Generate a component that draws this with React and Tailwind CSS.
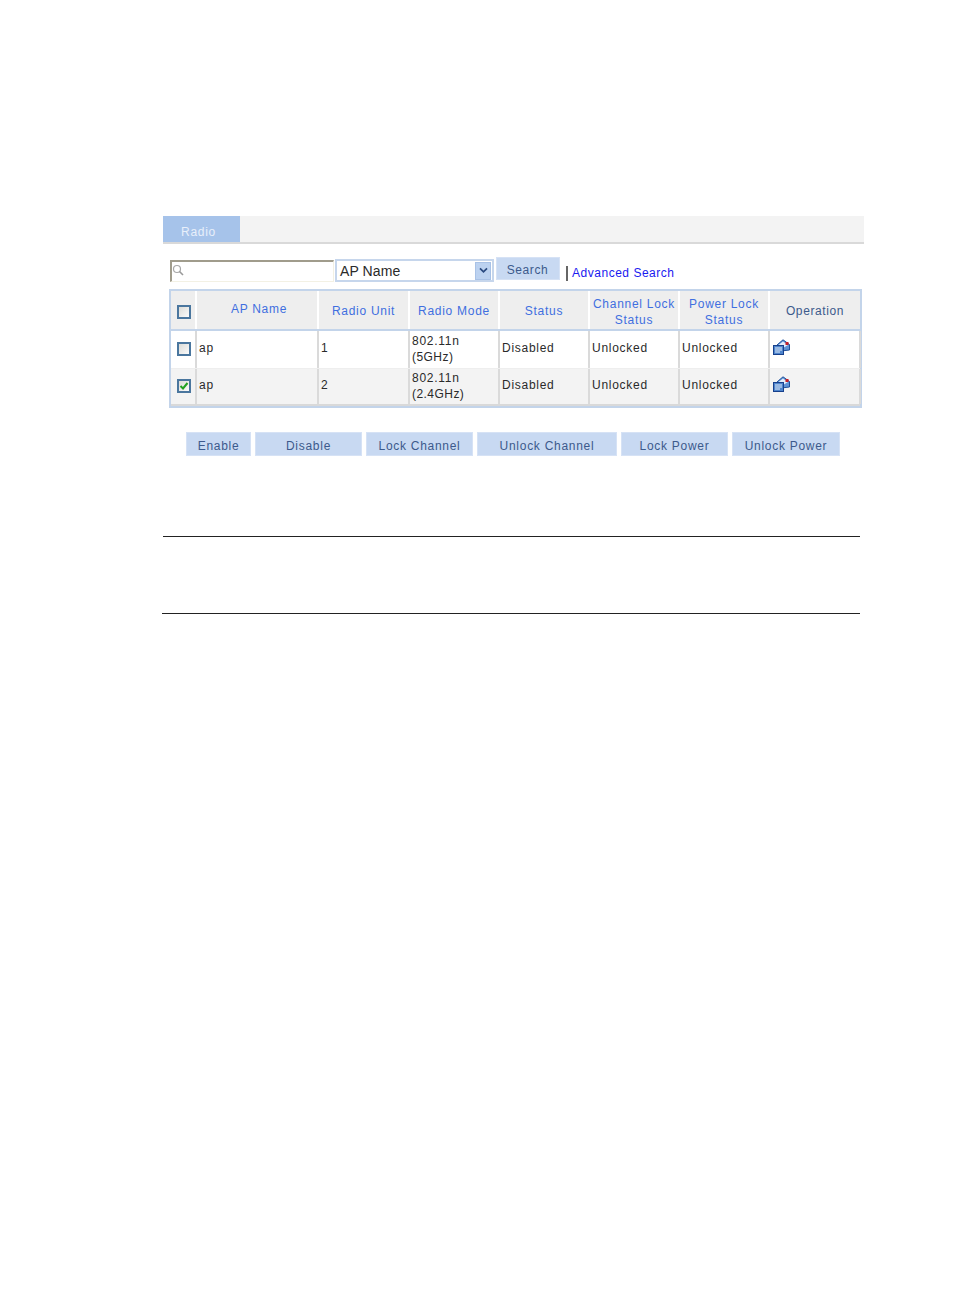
const FONT = "font-['Liberation_Sans',Arial,sans-serif]";

function Box({ checked }) {
  return (
    <span className="relative block ml-[1px] w-[14px] h-[14px] border-2 border-[#4a769e] bg-gradient-to-br from-[#dcdcd8] to-[#fbfbfb]">
      {checked && (
        <svg viewBox="0 0 10 10" className="absolute inset-0 w-[10px] h-[10px]">
          <path d="M1.5 5 L4 7.5 L8.5 2" fill="none" stroke="#21a121" strokeWidth="2" />
        </svg>
      )}
    </span>
  );
}

function OpIcon() {
  return (
    <svg viewBox="0 0 17 16" className="w-[17px] h-[16px]">
      <path d="M4 6 L10 0.8 L16.5 5.5 L16.5 11 L8 12 Z" fill="#5f93d6" stroke="#1f4f9a" strokeWidth="1" />
      <path d="M5.5 6 L10 2.5 L15 6 L10 9 Z" fill="#e4eefb" />
      <rect x="12.5" y="3" width="3" height="3" fill="#c4202a" />
      <rect x="0.5" y="6.5" width="10" height="9" fill="#4d84cc" stroke="#17408c" strokeWidth="1" />
      <path d="M2 9 H9 M2 11 H9 M2 13 H7" stroke="#e6eefa" strokeWidth="1" />
    </svg>
  );
}

const cols = "grid-cols-[26px_122px_91px_90px_90px_90px_90px_91px]";
const headers = [
  ["AP Name", "pb-[3px] pl-[4px]"],
  ["Radio Unit", "pt-[2px]"],
  ["Radio Mode", "pt-[2px]"],
  ["Status", "pt-[2px]"],
  ["Channel Lock\nStatus", "pt-[4px]"],
  ["Power Lock\nStatus", "pt-[4px]"],
];
const rows = [
  { unit: "1", mode: ["802.11n", "(5GHz)"], bg: "bg-white", h: "h-[37px]", checked: false },
  { unit: "2", mode: ["802.11n", "(2.4GHz)"], bg: "bg-[#f3f3f3] border-t border-[#eeeeee] border-b-2 border-b-[#d9d9d9]", h: "h-[38px]", checked: true },
];
const buttons = [
  ["Enable", "w-[65px]"],
  ["Disable", "w-[107px]"],
  ["Lock Channel", "w-[107px]"],
  ["Unlock Channel", "w-[140px]"],
  ["Lock Power", "w-[107px]"],
  ["Unlock Power", "w-[108px]"],
];

function Cell({ className = "pb-[4px]", children }) {
  return <div className={`flex items-center border-r-2 border-[#dadada] pl-[2px] ${className}`}>{children}</div>;
}

export default function App() {
  return (
    <div className={`${FONT} w-[954px] h-[1296px] bg-white pt-[216px] pl-[163px] text-[12px] leading-[16px] tracking-[0.72px] text-[#2a2a2a]`}>
      <div className="w-[701px] h-[28px] bg-[#f3f3f3] border-b-2 border-[#d9d9d9]">
        <div className="w-[77px] h-[26px] bg-[#a6c3ea] text-[#e8effa] pl-[18px] pt-[8px]">Radio</div>
      </div>

      <div className="flex items-start h-[45px] pt-[13px] pl-[7px]">
        <div className="relative mt-[3px] w-[164px] h-[22px] border-t-2 border-l-2 border-[#a09c8c] border-b border-r border-b-[#f3f1e4] border-r-[#f3f1e4] bg-white">
          <svg viewBox="0 0 12 12" className="absolute left-[0px] top-[2px] w-[12px] h-[12px]">
            <circle cx="5" cy="5" r="3.5" fill="none" stroke="#a8a8a8" strokeWidth="1.2" />
            <path d="M7.5 7.5 L11 11" stroke="#9a9a9a" strokeWidth="1.6" />
          </svg>
        </div>
        <div className="ml-[1px] mt-[2px] w-[159px] h-[23px] border-2 border-[#c6d6ec] bg-white flex items-center justify-between pl-[3px] pr-[1px] text-[14px] tracking-[0.1px]">
          <span>AP Name</span>
          <span className="w-[16px] h-[18px] bg-[#bcd2f0] border border-[#a9c2e6] flex items-center justify-center">
            <svg viewBox="0 0 10 8" className="w-[9px] h-[7px]">
              <path d="M1 1.5 L5 5.5 L9 1.5" fill="none" stroke="#2a4a80" strokeWidth="2" />
            </svg>
          </span>
        </div>
        <div className="ml-[2px] w-[64px] h-[23px] bg-[#c8d9f2] border border-[#d6e2f5] text-[#3c5a8c] tracking-[0.6px] flex items-center justify-center pt-[2px] pr-[1px]">Search</div>
        <div className="ml-[6px] mt-[9px] w-[2px] h-[15px] bg-[#666]"></div>
        <a className="ml-[4px] mt-[8px] text-[#1a1af0] tracking-[0.52px]">Advanced Search</a>
      </div>

      <div className="ml-[6px] w-[693px] border-2 border-[#c3d4ea]">
        <div className={`grid ${cols} h-[40px] bg-[#eeeeee] border-b-2 border-[#c3d4ea] text-[#3f6fe0] text-center`}>
          <div className="flex items-center justify-center border-r-2 border-white pt-[3px]"><Box /></div>
          {headers.map(([t, c]) => (
            <div key={t} className={`flex items-center justify-center whitespace-pre-line border-r-2 border-white ${c}`}>{t}</div>
          ))}
          <div className="flex items-center justify-center text-[#3c5a8c] tracking-[0.6px] pt-[2px] pr-[1px]">Operation</div>
        </div>
        {rows.map((r) => (
          <div key={r.unit} className={`grid ${cols} ${r.h} ${r.bg}`}>
            <div className="flex items-center justify-center border-r-2 border-[#dadada] pb-[2px]"><Box checked={r.checked} /></div>
            <Cell>ap</Cell>
            <Cell>{r.unit}</Cell>
            <Cell className="pb-[2px]"><span>{r.mode[0]}<br /><span className="tracking-[0.45px]">{r.mode[1]}</span></span></Cell>
            <Cell>Disabled</Cell>
            <Cell>Unlocked</Cell>
            <Cell>Unlocked</Cell>
            <div className="flex items-center pl-[3px] pb-[5px] border-r-2 border-[#dadada]"><OpIcon /></div>
          </div>
        ))}
      </div>

      <div className="flex gap-[4px] ml-[23px] mt-[24px]">
        {buttons.map(([t, w]) => (
          <div key={t} className={`${w} h-[24px] bg-[#c8d9f2] border border-[#d6e2f5] text-[#3c5a8c] flex items-center justify-center pt-[3px]`}>{t}</div>
        ))}
      </div>

      <div className="w-[697px] h-px mt-[80px] bg-[#222]"></div>
      <div className="w-[698px] h-px -ml-[1px] mt-[76px] bg-[#222]"></div>
    </div>
  );
}
